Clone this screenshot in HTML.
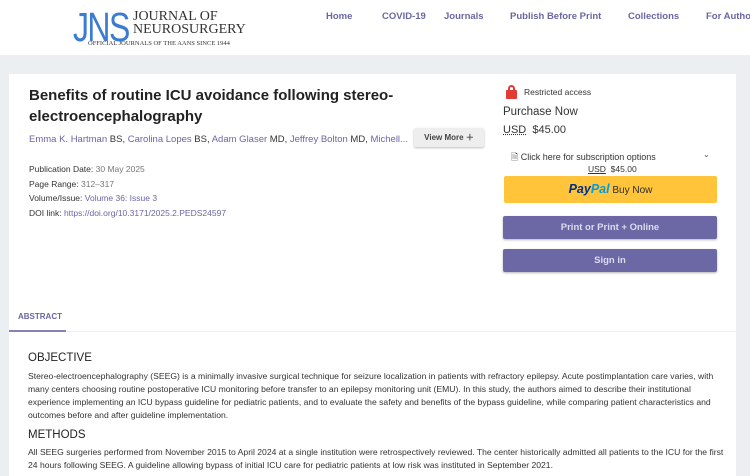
<!DOCTYPE html>
<html><head><meta charset="utf-8"><style>
*{margin:0;padding:0;box-sizing:border-box}
body{width:750px;height:476px;overflow:hidden;background:#eceff2;font-family:"Liberation Sans",sans-serif;color:#222;position:relative}
.hdr{position:absolute;left:0;top:0;width:750px;height:55px;background:#fff}
.a{position:absolute;white-space:nowrap}
.nav{font-size:9.5px;font-weight:bold;color:#6a66a3;top:11px}
.card{position:absolute;left:9px;top:74px;width:727px;height:402px;background:#fff}
.lnk{color:#6a66a3}
.btn{position:absolute;left:503px;width:214px;height:23px;background:#6c68a5;color:#dcdcee;font-size:9.5px;font-weight:bold;text-align:center;line-height:23px;border-radius:2px;box-shadow:0 1px 2px rgba(0,0,0,.3)}
.body{font-size:8.6px;line-height:13px;color:#333;width:696px}
</style></head><body>
<div class="hdr"></div>
<div class="a" style="left:73px;top:7px;font-family:'Liberation Sans',sans-serif;font-size:41px;color:#3b7bd0;line-height:40px;letter-spacing:-2px;transform:scaleX(.78);transform-origin:left">JNS</div>
<div class="a" style="left:133px;top:10px;font-family:'Liberation Serif',serif;font-size:14px;line-height:13px;color:#333">JOURNAL OF<br>NEUROSURGERY</div>
<div class="a" style="left:88px;top:40px;font-family:'Liberation Serif',serif;font-size:6.5px;color:#333">OFFICIAL JOURNALS OF THE AANS SINCE 1944</div>
<div class="a nav" style="left:326px">Home</div>
<div class="a nav" style="left:382px">COVID-19</div>
<div class="a nav" style="left:444px">Journals</div>
<div class="a nav" style="left:510px">Publish Before Print</div>
<div class="a nav" style="left:628px">Collections</div>
<div class="a nav" style="left:706px">For Authors</div>
<div class="card"></div>
<div class="a" style="left:29px;top:85px;font-size:15px;font-weight:bold;line-height:21px;color:#222">Benefits of routine ICU avoidance following stereo-<br>electroencephalography</div>
<div class="a" style="left:29px;top:134px;font-size:9.5px;color:#333"><span class="lnk">Emma K. Hartman</span> BS, <span class="lnk">Carolina Lopes</span> BS, <span class="lnk">Adam Glaser</span> MD, <span class="lnk">Jeffrey Bolton</span> MD, <span class="lnk">Michell...</span></div>
<div class="a" style="left:414px;top:128px;width:70px;height:19px;background:#eee;border-radius:2px;box-shadow:0 1px 2px rgba(0,0,0,.25);font-size:8px;font-weight:bold;color:#444;line-height:19px;text-align:center">View More ＋</div>
<div class="a" style="left:29px;top:162px;font-size:8.5px;line-height:14.5px;color:#333">Publication Date: <span style="color:#777">30 May 2025</span><br>Page Range: <span style="color:#777">312–317</span><br>Volume/Issue: <span class="lnk">Volume 36: Issue 3</span><br>DOI link: <span class="lnk">https://doi.org/10.3171/2025.2.PEDS24597</span></div>
<div class="a" style="left:506px;top:85px;width:11px;height:14px"><div style="position:absolute;left:2px;top:0;width:7px;height:8px;border:2px solid #e53935;border-radius:4px 4px 0 0"></div><div style="position:absolute;left:0;top:5px;width:11px;height:9px;background:#e53935;border-radius:1px"></div></div>
<div class="a" style="left:524px;top:87px;font-size:8.5px;color:#333">Restricted access</div>
<div class="a" style="left:503px;top:106px;font-size:11.5px;color:#333">Purchase Now</div>
<div class="a" style="left:503px;top:124px;font-size:11px;color:#333"><u style="text-decoration-style:dotted">USD</u> &nbsp;$45.00</div>
<div class="a" style="left:511px;top:150px;font-size:9px;color:#333">🗎 Click here for subscription options</div>
<div class="a" style="left:703px;top:150px;font-size:8px;color:#555">⌄</div>
<div class="a" style="left:588px;top:164px;font-size:8.5px;color:#333"><u>USD</u> &nbsp;$45.00</div>
<div class="a" style="left:504px;top:176px;width:213px;height:27px;background:#ffc439;border-radius:2px;text-align:center;line-height:27px;font-size:10px;color:#2c2e2f"><b style="font-style:italic;font-size:12.5px;color:#003087">Pay<span style="color:#009cde">Pal</span></b> Buy Now</div>
<div class="btn" style="top:216px">Print or Print + Online</div>
<div class="btn" style="top:249px">Sign in</div>
<div class="a" style="left:18px;top:312px;font-size:8px;font-weight:bold;color:#6a66a3">ABSTRACT</div>
<div class="a" style="left:9px;top:330px;width:57px;height:2px;background:#8582b5"></div>
<div class="a" style="left:66px;top:331px;width:670px;height:1px;background:#eee"></div>
<div class="a" style="left:28px;top:352px;font-size:11.5px;color:#222">OBJECTIVE</div>
<div class="a body" style="left:28px;top:370px;white-space:normal">Stereo-electroencephalography (SEEG) is a minimally invasive surgical technique for seizure localization in patients with refractory epilepsy. Acute postimplantation care varies, with many centers choosing routine postoperative ICU monitoring before transfer to an epilepsy monitoring unit (EMU). In this study, the authors aimed to describe their institutional experience implementing an ICU bypass guideline for pediatric patients, and to evaluate the safety and benefits of the bypass guideline, while comparing patient characteristics and outcomes before and after guideline implementation.</div>
<div class="a" style="left:28px;top:429px;font-size:11.5px;color:#222">METHODS</div>
<div class="a body" style="left:28px;top:446px;white-space:normal">All SEEG surgeries performed from November 2015 to April 2024 at a single institution were retrospectively reviewed. The center historically admitted all patients to the ICU for the first 24 hours following SEEG. A guideline allowing bypass of initial ICU care for pediatric patients at low risk was instituted in September 2021.</div>
</body></html>
